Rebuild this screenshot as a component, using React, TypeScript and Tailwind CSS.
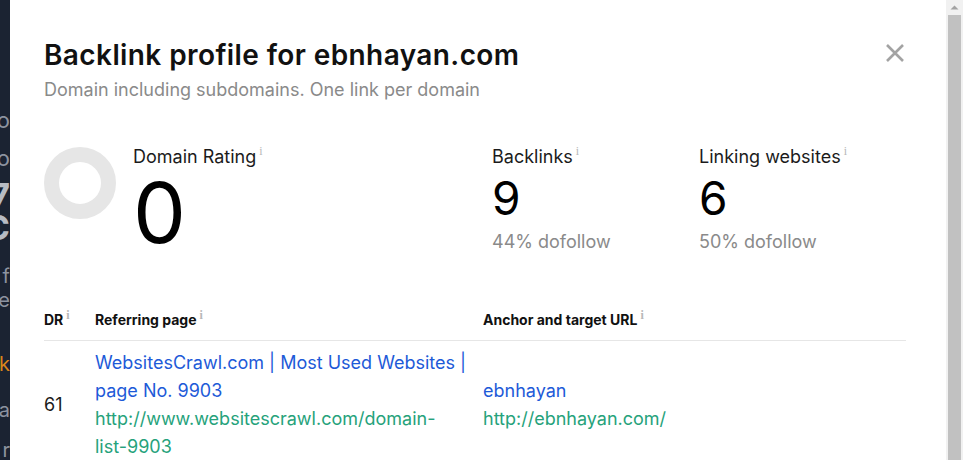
import React from "react";

const Info = () => (
	<span className="ml-[3px] align-top text-[12px] leading-none text-[#b8b8b8] font-['Liberation_Serif',serif]">
		i
	</span>
);

const Donut = () => (
	<svg width="72" height="72" viewBox="0 0 72 72" className="shrink-0">
		<circle cx="36" cy="36" r="28.5" fill="none" stroke="#e6e6e6" strokeWidth="15" />
	</svg>
);

const Stat = ({ label, value, sub }: { label: string; value: string; sub: string }) => (
	<div className="flex flex-col">
		<div className="text-[18px] leading-6 text-[#1b1b1b]">
			{label}
			<Info />
		</div>
		<div className="mt-[6px] text-[46px] leading-[46px] text-black">{value}</div>
		<div className="mt-[9px] text-[18px] leading-6 text-[#8a8a8a]">{sub}</div>
	</div>
);

export default function App() {
	return (
		<div className="flex h-[460px] w-full overflow-hidden bg-white font-['Inter',sans-serif]">
			{/* page behind the modal */}
			<div className="flex w-[10px] shrink-0 flex-col items-end overflow-hidden bg-[#1b2332] pt-[108px] text-[#8d93a0] whitespace-nowrap">
				<span className="text-[22px] leading-6">o</span>
				<span className="mt-[14px] text-[22px] leading-6">o</span>
				<span className="mt-[10px] text-[34px] font-bold leading-8 text-[#b8bcc4]">7</span>
				<span className="text-[34px] font-bold leading-8 text-[#b8bcc4]">C</span>
				<span className="mt-[20px] text-[20px] leading-6">f</span>
				<span className="text-[20px] leading-6">e</span>
				<span className="mt-[40px] text-[20px] leading-6 text-[#d9851a]">k</span>
				<div className="mt-[2px] h-[2px] w-[10px] bg-[#d9851a]" />
				<div className="mt-[14px] h-px w-[10px] bg-[#4a5262]" />
				<span className="mt-[6px] text-[20px] leading-6">a</span>
				<div className="mt-[10px] h-px w-[10px] bg-[#4a5262]" />
				<span className="mt-[6px] text-[20px] leading-6">r</span>
			</div>

			{/* modal */}
			<div className="relative flex-1 bg-white pl-[34px] pr-[40px] pt-[39px]">
				<button className="absolute right-[41px] top-[43px] text-[#a3a3a3]">
					<svg width="20" height="20" viewBox="0 0 20 20">
						<path d="M2 2L18 18M18 2L2 18" stroke="currentColor" strokeWidth="2.6" />
					</svg>
				</button>

				<h1 className="text-[28px] font-semibold leading-8 tracking-[0.4px] text-[#111]">
					Backlink profile for ebnhayan.com
				</h1>
				<p className="mt-[7px] text-[18px] leading-6 text-[#8a8a8a]">Domain including subdomains. One link per domain</p>

				<div className="mt-[43px] flex">
					<div className="flex w-[448px] gap-[17px]">
						<div className="pt-[2px]">
							<Donut />
						</div>
						<div className="flex flex-col">
							<div className="text-[18px] leading-6 text-[#1b1b1b]">
								Domain Rating
								<Info />
							</div>
							<div className="mt-[6px] text-[84px] leading-[76px] text-black">0</div>
						</div>
					</div>
					<div className="w-[207px]">
						<Stat label="Backlinks" value="9" sub="44% dofollow" />
					</div>
					<Stat label="Linking websites" value="6" sub="50% dofollow" />
				</div>

				<table className="mt-[55px] w-full border-collapse text-left">
					<thead>
						<tr className="border-b border-[#e6e6e6] text-[14px] font-bold text-[#111]">
							<th className="w-[51px] pb-[10px] font-bold">
								DR
								<Info />
							</th>
							<th className="w-[388px] pb-[10px] font-bold">
								Referring page
								<Info />
							</th>
							<th className="pb-[10px] font-bold">
								Anchor and target URL
								<Info />
							</th>
						</tr>
					</thead>
					<tbody>
						<tr className="text-[18px] leading-7">
							<td className="pt-[8px] align-middle text-[#1b1b1b]">61</td>
							<td className="pr-[12px] pt-[8px] align-top">
								<div className="text-[#1d5ad8]">WebsitesCrawl.com | Most Used Websites | page No. 9903</div>
								<div className="text-[#26a27b]">
									http://www.websitescrawl.com/domain-
									<br />
									list-9903
								</div>
							</td>
							<td className="pt-[8px] align-middle">
								<div className="text-[#1d5ad8]">ebnhayan</div>
								<div className="text-[#26a27b]">http://ebnhayan.com/</div>
							</td>
						</tr>
					</tbody>
				</table>
			</div>

			{/* scrollbar */}
			<div className="flex w-[17px] shrink-0 flex-col items-center bg-[#f1f1f1]">
				<svg width="17" height="15" viewBox="0 0 17 15">
					<path d="M4.5 9.5L8.5 5.5L12.5 9.5Z" fill="#a3a3a3" />
				</svg>
				<div className="w-[13px] flex-1 bg-[#c1c1c1]" />
			</div>
		</div>
	);
}
